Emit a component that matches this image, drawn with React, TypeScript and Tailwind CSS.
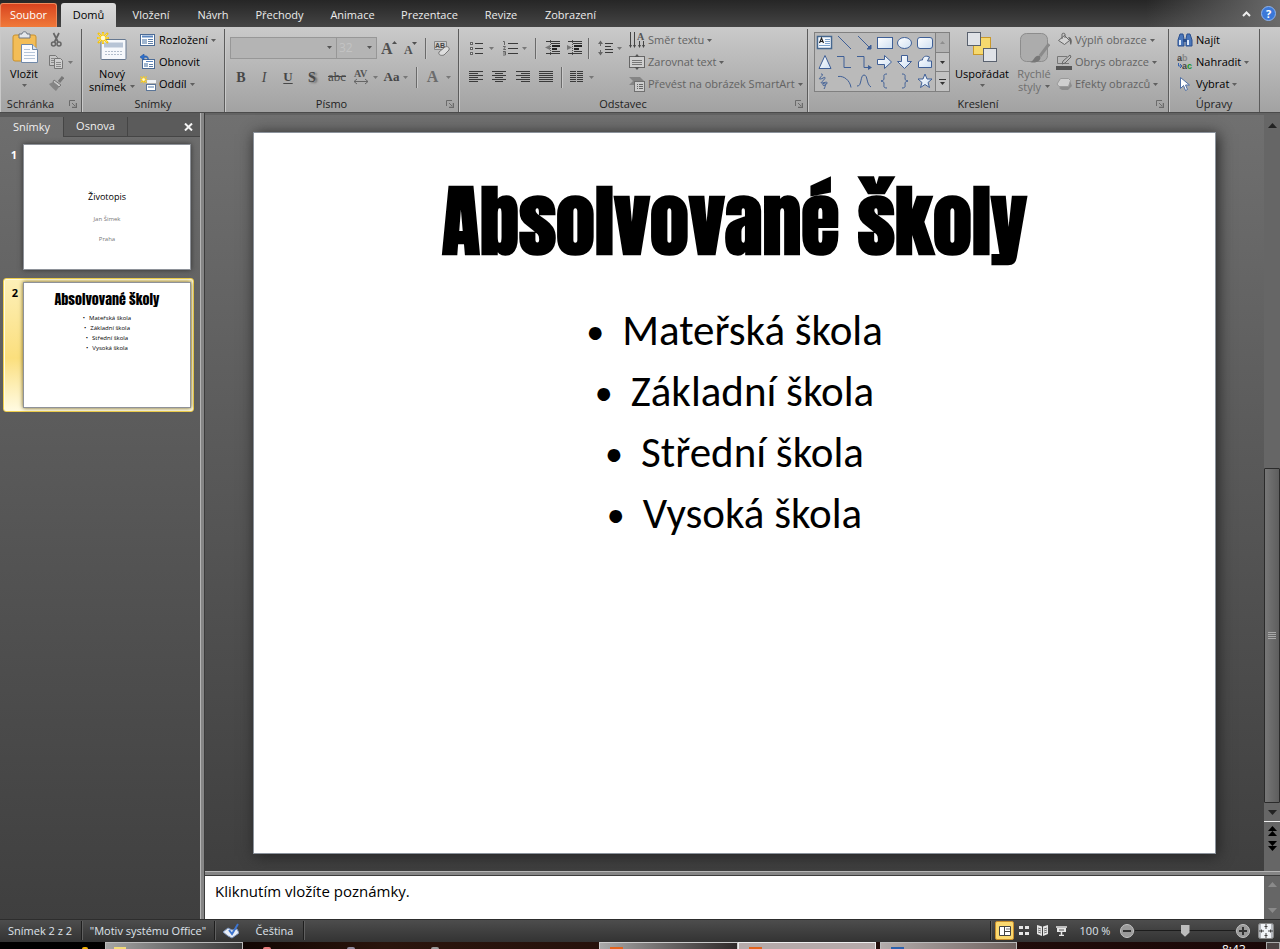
import { useState } from "react";
import type { ReactNode } from "react";

const tabs = [
  { name: "Vložení", width: "w-[66px]" },
  { name: "Návrh", width: "w-[58px]" },
  { name: "Přechody", width: "w-[75px]" },
  { name: "Animace", width: "w-[71px]" },
  { name: "Prezentace", width: "w-[83px]" },
  { name: "Revize", width: "w-[60px]" },
  { name: "Zobrazení", width: "w-[79px]" },
];

const skoly = ["Mateřská škola", "Základní škola", "Střední škola", "Vysoká škola"];

function Caret({ className = "text-[#5f5f5f]" }: { className?: string }) {
  return (
    <svg width="5" height="3" viewBox="0 0 5 3" className={`shrink-0 ${className}`} aria-hidden="true">
      <path d="M0 0h5L2.500 3z" fill="currentColor" />
    </svg>
  );
}

function Svg({ size = 16, children }: { size?: number; children: ReactNode }) {
  return (
    <svg width={size} height={size} viewBox={`0 0 ${size} ${size}`} className="shrink-0" fill="none" aria-hidden="true">
      {children}
    </svg>
  );
}

function Group({ label, width, launcher, children }: { label: string; width: string; launcher?: boolean; children: ReactNode }) {
  return (
    <section
      aria-label={label}
      className={`${width} flex shrink-0 flex-col border-r border-[#5c5c5c] shadow-[inset_1px_0_0_#c9c9c9]`}
    >
      <div className="flex h-[67px]">{children}</div>
      <div className={`flex h-4 items-center ${launcher ? "pr-1" : ""}`}>
        <span className={`flex-1 text-center text-[#222] ${launcher ? "pr-2" : ""}`}>{label}</span>
        {launcher && (
          <button aria-label={`${label} – další možnosti`}>
            <svg width="8" height="8" viewBox="0 0 8 8" fill="none" stroke="#6b6b6b" aria-hidden="true">
              <path d="M.5 6V.5H6M3 3l3 3" />
              <path d="M7.500 3v4.500H3" strokeWidth="1.500" />
            </svg>
          </button>
        )}
      </div>
    </section>
  );
}

function Row({ icon, label, caret, disabled }: { icon: ReactNode; label: string; caret?: boolean; disabled?: boolean }) {
  return (
    <button
      disabled={disabled}
      className={`flex h-[22px] items-center gap-[3px] whitespace-nowrap ${disabled ? "text-[#636363]" : "text-black"}`}
    >
      {icon}
      <span>{label}</span>
      {caret && <Caret />}
    </button>
  );
}

function Tool({ label, width, children, caret }: { label: string; width: string; children: ReactNode; caret?: boolean }) {
  return (
    <button aria-label={label} disabled className={`${width} flex h-[22px] shrink-0 items-center justify-center gap-1 text-[#474747]`}>
      {children}
      {caret && <Caret className="text-[#777]" />}
    </button>
  );
}

function Sep() {
  return <span className="mx-1 h-[21px] w-px shrink-0 bg-[#6a6a6a] shadow-[1px_0_0_#c9c9c9]" />;
}

function Lines({ rows, offset = 0 }: { rows: number[][]; offset?: number }) {
  return (
    <>
      {rows.map(([x, w], i) => (
        <path key={i} d={`M${x} ${offset + i * 2 + 0.5}h${w}`} stroke="#3a3a3a" />
      ))}
    </>
  );
}

function Sparkle() {
  return (
    <>
      <path d="M6 0v12M0 6h12M1 1l10 10M11 1L1 11" stroke="#f2c313" strokeWidth="2.200" />
      <path d="M6 1v10M1 6h10M2 2l8 8M10 2l-8 8" stroke="#ffe873" strokeWidth=".8" />
      <circle cx="6" cy="6" r="2.200" fill="#fffbd8" />
    </>
  );
}

function ShapeGallery() {
  const line = "#3f5f96";
  const shapes: [string, ReactNode][] = [
    ["Textové pole", <><rect x="1.500" y="2.500" width="14" height="12" fill="#f7fbff" stroke="#46678f" strokeWidth="1.500" /><path d="M3.500 9l2-5 2 5M4.200 7.500h2.600" stroke="#222" strokeWidth="1.200" /><path d="M9 5.500h5M9 7.500h5M9 9.500h5M3 11.500h11" stroke="#7fa3cc" /></>],
    ["Čára", <path d="M2 2l13 13" stroke={line} />],
    ["Šipka", <path d="M2 2l12 12M15 11v4h-4z" stroke={line} fill={line} />],
    ["Obdélník", <rect x="1.500" y="3.500" width="15" height="11" fill="url(#fillShape)" stroke={line} />],
    ["Elipsa", <ellipse cx="8.500" cy="9" rx="7" ry="5.500" fill="url(#fillShape)" stroke={line} />],
    ["Zaoblený obdélník", <rect x="1.500" y="3.500" width="15" height="11" rx="2.500" fill="url(#fillShape)" stroke={line} />],
    ["Trojúhelník", <path d="M9 2.500L15 15.500H3z" fill="url(#fillShape)" stroke={line} />],
    ["Spojnice", <path d="M1 3.500h7v11h7" stroke={line} />],
    ["Spojnice se šipkou", <><path d="M1 3.500h7v11h6" stroke={line} /><path d="M12 12l4 2.500-4 2.500z" fill={line} /></>],
    ["Šipka doprava", <path d="M1.500 6.500h7v-4l7 6.500-7 6.500v-4h-7z" fill="url(#fillShape)" stroke={line} />],
    ["Šipka dolů", <path d="M5.500 2.500h6v6h4l-7 7-7-7h4z" fill="url(#fillShape)" stroke={line} />],
    ["Volný tvar", <path d="M2.500 14.500V9c1-2 3-2 4-2 0-3 3-5 7-3l-2 4h4v6.500z" fill="url(#fillShape)" stroke={line} />],
    ["Skica", <path d="M5 2c5 0-4 5-1 5s5-3 5-1-6 5-3 5 5-2 5 0-5 4-4 1 4 0 1 5" stroke={line} />],
    ["Oblouk", <path d="M2 4.500c6-1 12 4 13 11" stroke={line} />],
    ["Křivka", <path d="M1 14c5 1 3-11 7-11s2 9 7 12" stroke={line} />],
    ["Levá závorka", <path d="M11 2c-4 0-3 2-3 4s-1 3-3 3c2 0 3 1 3 3s-1 4 3 4" stroke={line} />],
    ["Pravá závorka", <path d="M6 2c4 0 3 2 3 4s1 3 3 3c-2 0-3 1-3 3s1 4-3 4" stroke={line} />],
    ["Hvězda", <path d="M9 2l2 5h5l-4 3.500 1.500 5L9 12.500l-4.500 3 1.500-5L2 7h5z" fill="url(#fillShape)" stroke={line} />],
  ];
  return (
    <div className="flex h-[60px] border border-[#808080] bg-[#bababa]">
      <svg width="0" height="0" className="absolute" aria-hidden="true">
        <linearGradient id="fillShape" x1="0" y1="0" x2="1" y2="1">
          <stop offset="0" stopColor="#ffffff" />
          <stop offset="1" stopColor="#cfe0f2" />
        </linearGradient>
      </svg>
      <div className="grid grid-cols-6">
        {shapes.map(([name, shape]) => (
          <button key={name} aria-label={name} className="flex h-[19px] w-5 items-center justify-center">
            <Svg size={18}>{shape}</Svg>
          </button>
        ))}
      </div>
      <div className="flex w-[14px] flex-col divide-y divide-[#808080] border-l border-[#808080] bg-[#c2c2c2]">
        <button aria-label="Předchozí řádek" className="flex flex-1 items-center justify-center bg-[#b2b2b2]">
          <Caret className="rotate-180 text-[#8e8e8e]" />
        </button>
        <button aria-label="Další řádek" className="flex flex-1 items-center justify-center">
          <Caret className="text-[#333]" />
        </button>
        <button aria-label="Více" className="flex flex-1 flex-col items-center justify-center gap-[2px]">
          <span className="h-px w-[7px] bg-[#333]" />
          <Caret className="text-[#333]" />
        </button>
      </div>
    </div>
  );
}

function Ribbon() {
  return (
    <div className="flex overflow-hidden border-b border-[#4b4b4b] bg-linear-to-b from-[#cacaca] to-[#a2a2a2] pt-[2px]">
      <Group label="Schránka" width="w-[82px]" launcher>
        <button className="flex w-12 flex-col items-center pt-[2px] leading-[13px] text-black">
          <Svg size={32}>
            <rect x="5" y="4" width="23" height="26" rx="2" fill="#f3bd57" stroke="#c8902d" />
            <path d="M11 3h3c0-3 5-3 5 0h3v4H11z" fill="#e3e6ea" stroke="#6d7580" />
            <path d="M13.500 13.500h11l5 5v13h-16z" fill="#fbfcff" stroke="#7189a8" />
            <path d="M24.500 13.500v5h5" fill="#d9e4f1" stroke="#7189a8" />
            <path d="M16 18.500h6M16 21.500h11M16 24.500h11M16 27.500h11" stroke="#b6c6da" />
          </Svg>
          <span className="pt-1">Vložit</span>
          <span className="flex h-[11px] items-center">
            <Caret />
          </span>
        </button>
        <div className="flex flex-col">
          <button aria-label="Vyjmout" className="flex h-[22px] items-center">
            <Svg>
              <path d="M5.500 1L10 10M11 1L6.500 10" stroke="#666" strokeWidth="1.700" />
              <circle cx="5.500" cy="12" r="2" stroke="#666" strokeWidth="1.500" />
              <circle cx="11" cy="12" r="2" stroke="#666" strokeWidth="1.500" />
            </Svg>
          </button>
          <button aria-label="Kopírovat" className="flex h-[22px] items-center gap-1">
            <Svg>
              <path d="M1.500 1.500h6l2 2v8h-8z" fill="#c8c8c8" stroke="#777" />
              <path d="M6.500 4.500h6l2 2v8h-8z" fill="#d0d0d0" stroke="#777" />
              <path d="M3 4.500h3M3 6.500h3M3 8.500h3M8 8.500h5M8 10.500h5M8 12.500h5" stroke="#8a8a8a" />
            </Svg>
            <Caret className="text-[#777]" />
          </button>
          <button aria-label="Kopírovat formát" className="flex h-[22px] items-center">
            <Svg>
              <path d="M15 1l-4 5" stroke="#777" strokeWidth="3" />
              <path d="M6 4l7 5-2 2-6-5z" fill="#c9c9c9" stroke="#777" />
              <path d="M5 6l6 5-3 4C5 13 3 10 1 8z" fill="#858585" />
            </Svg>
          </button>
        </div>
      </Group>

      <Group label="Snímky" width="w-[143px]">
        <button className="ml-[2px] flex w-[56px] flex-col items-center pt-[2px] leading-[13px] text-black">
          <Svg size={32}>
            <rect x="5" y="8.500" width="25" height="20" rx="1" fill="#f6f8fb" stroke="#667890" />
            <rect x="8" y="11.500" width="19" height="5" fill="#b7c4d5" />
            <path d="M9 20.500h17M9 23.500h17" stroke="#b2bdcb" strokeDasharray="2 1" />
            <g transform="translate(1 1)">
              <Sparkle />
            </g>
          </Svg>
          <span className="pt-1">Nový</span>
          <span className="flex items-center gap-1">
            snímek <Caret />
          </span>
        </button>
        <div className="flex flex-col">
          <Row
            label="Rozložení"
            caret
            icon={
              <Svg>
                <rect x=".5" y="2.500" width="14" height="11" fill="#fff" stroke="#4b6a94" />
                <path d="M2 4.500h11" stroke="#5b86c0" strokeWidth="2" />
                <rect x="2" y="7" width="5" height="5" fill="#a0b6d0" />
                <path d="M8 7.500h5M8 9.500h5M8 11.500h5" stroke="#5f7fa8" />
              </Svg>
            }
          />
          <Row
            label="Obnovit"
            icon={
              <Svg>
                <rect x="2.500" y="5.500" width="12" height="9" fill="#fff" stroke="#4b6a94" />
                <path d="M6 7.500h7" stroke="#5b86c0" />
                <rect x="4" y="9" width="4" height="4" fill="#a0b6d0" />
                <path d="M9 10.500h4M9 12.500h4" stroke="#5f7fa8" />
                <path d="M8 6c0-3-2-3-4-2.500V6L0 3l4-3v2c3-.5 5 1 4 4z" fill="#2f6fca" stroke="#1d56a8" strokeWidth=".6" />
              </Svg>
            }
          />
          <Row
            label="Oddíl"
            caret
            icon={
              <Svg>
                <path d="M7 5.500h9" stroke="#f0f2f5" strokeWidth="3" />
                <rect x="6.500" y="8.500" width="9" height="6" fill="#fff" stroke="#5b7598" />
                <rect x="8" y="10" width="6" height="2" fill="#a6bbd4" />
                <g transform="scale(.6)">
                  <Sparkle />
                </g>
              </Svg>
            }
          />
        </div>
      </Group>

      <Group label="Písmo" width="w-[234px]" launcher>
        <div className="flex flex-col gap-[7px] pl-[5px] pt-2">
          <div className="flex h-[22px] items-center">
            <div className="relative h-[22px] w-[107px]">
              <select aria-label="Písmo" disabled className="h-full w-full appearance-none border border-[#979797] bg-[#b4b4b4] opacity-100" />
              <Caret className="absolute right-[5px] top-[9px] text-[#555]" />
            </div>
            <div className="relative h-[22px] w-10">
              <select
                aria-label="Velikost písma"
                disabled
                className="h-full w-full appearance-none border border-l-0 border-[#979797] bg-[#b4b4b4] pl-[2px] text-[12px] text-[#c3c3c3] opacity-100"
              >
                <option>32</option>
              </select>
              <Caret className="absolute right-[5px] top-[9px] text-[#555]" />
            </div>
            <Tool label="Zvětšit písmo" width="w-6">
              <Svg>
                <text x="0" y="14" fontSize="16" fontWeight="bold" fontFamily="Liberation Serif" fill="#505050">A</text>
                <path d="M11 4h5l-2.500-3z" fill="#505050" />
              </Svg>
            </Tool>
            <Tool label="Zmenšit písmo" width="w-5">
              <Svg>
                <text x="1" y="14" fontSize="12" fontWeight="bold" fontFamily="Liberation Serif" fill="#505050">A</text>
                <path d="M9 2h5l-2.500 3z" fill="#505050" />
              </Svg>
            </Tool>
            <Sep />
            <Tool label="Vymazat formátování" width="w-6">
              <Svg>
                <path d="M.5 1.500h12v8H.5z" fill="#ccc" stroke="#888" />
                <text x="1" y="8" fontSize="7" fontWeight="bold" fontFamily="Liberation Sans" fill="#444">AB</text>
                <path d="M5 12l6-5c2-1 5 0 4 3l-5 5c-3 1-6 0-5-3z" fill="#dedede" stroke="#777" />
              </Svg>
            </Tool>
          </div>
          <div className="flex h-[22px] items-center font-['Liberation_Serif',serif] text-[13px]">
            <Tool label="Tučné" width="w-[22px]"><b className="text-[14px]">B</b></Tool>
            <Tool label="Kurzíva" width="w-6"><i className="text-[14px]">I</i></Tool>
            <Tool label="Podtržené" width="w-6"><b className="underline underline-offset-2">U</b></Tool>
            <Tool label="Stín" width="w-6"><b className="text-[14px] [text-shadow:2px_1px_2px_#666]">S</b></Tool>
            <Tool label="Přeškrtnuté" width="w-[26px]"><b className="font-medium line-through">abc</b></Tool>
            <Tool label="Mezery mezi znaky" width="w-[30px]" caret>
              <svg width="16" height="16" viewBox="0 0 16 16" fill="none" aria-hidden="true">
                <text x="1" y="8" fontSize="10" fontWeight="bold" fontFamily="Liberation Serif" fill="#555">AV</text>
                <path d="M1 12.500h14M4 10l-3 2.500L4 15M12 10l3 2.500-3 2.500" stroke="#666" />
              </svg>
            </Tool>
            <Tool label="Velká písmena" width="w-8" caret><b>Aa</b></Tool>
            <Sep />
            <Tool label="Barva písma" width="w-8" caret><b className="px-1 text-[16px] text-[#6c6c6c]">A</b></Tool>
          </div>
        </div>
      </Group>

      <Group label="Odstavec" width="w-[349px]" launcher>
        <div className="flex w-[170px] flex-col gap-[7px] pl-[6px] pt-2">
          <div className="flex h-[22px] items-center">
            <Tool label="Odrážky" width="w-8" caret>
              <Svg>
                <path d="M6 3.500h8M6 8.500h8M6 13.500h8" stroke="#3a3a3a" />
                <path d="M1 3.500h3M1 8.500h3M1 13.500h3" stroke="#666" strokeWidth="3" />
                <path d="M2 3.500h1M2 8.500h1M2 13.500h1" stroke="#ddd" />
              </Svg>
            </Tool>
            <Tool label="Číslování" width="w-[34px]" caret>
              <Svg>
                <path d="M6 3.500h10M6 8.500h10M6 13.500h10" stroke="#3a3a3a" />
                <path d="M1 1.500h1.500V5M1 6.500h2.500l-2 3h2.500M1 11.500h2.500V15H1m0-2h2" stroke="#666" />
              </Svg>
            </Tool>
            <Sep />
            <Tool label="Zmenšit úroveň" width="w-6">
              <Svg>
                <path d="M2 1.500h14M7 3.500h9M2 13.500h14" stroke="#3a3a3a" />
                <path d="M8 6h8M8 9h5" stroke="#222" strokeWidth="2" />
                <path d="M8 11.500h8" stroke="#3a3a3a" />
                <path d="M6 5v5L1 7.500z" fill="#777" />
                <path d="M6.500 0v16" stroke="#555" strokeDasharray="1 1" />
              </Svg>
            </Tool>
            <Tool label="Zvětšit úroveň" width="w-5">
              <Svg>
                <path d="M2 1.500h14M7 3.500h9M2 13.500h14" stroke="#3a3a3a" />
                <path d="M8 6h8M8 9h5" stroke="#222" strokeWidth="2" />
                <path d="M8 11.500h8" stroke="#3a3a3a" />
                <path d="M1 5v5l5-2.500z" fill="#777" />
                <path d="M6.500 0v16" stroke="#555" strokeDasharray="1 1" />
              </Svg>
            </Tool>
            <Sep />
            <Tool label="Řádkování" width="w-8" caret>
              <Svg>
                <path d="M8 3.500h8M8 6.500h6M8 9.500h8M8 12.500h8" stroke="#3a3a3a" />
                <path d="M3.500 1v5M3.500 10v5" stroke="#666" />
                <path d="M1 4l2.500-3.500L6 4zM1 12l2.500 3.500L6 12z" fill="#666" />
              </Svg>
            </Tool>
          </div>
          <div className="flex h-[22px] items-center gap-[7px] pl-1">
            <Tool label="Zarovnat vlevo" width="w-4"><Svg><Lines offset={2} rows={[[0, 14], [0, 9], [0, 14], [0, 9], [0, 14], [0, 9]]} /></Svg></Tool>
            <Tool label="Na střed" width="w-4"><Svg><Lines offset={2} rows={[[0, 14], [3, 8], [0, 14], [3, 8], [0, 14], [3, 8]]} /></Svg></Tool>
            <Tool label="Zarovnat vpravo" width="w-4"><Svg><Lines offset={2} rows={[[1, 14], [6, 9], [1, 14], [6, 9], [1, 14], [6, 9]]} /></Svg></Tool>
            <Tool label="Do bloku" width="w-4"><Svg><Lines offset={2} rows={[[1, 14], [1, 14], [1, 14], [1, 14], [1, 14], [1, 14]]} /></Svg></Tool>
            <span className="h-[21px] w-px bg-[#6a6a6a] shadow-[1px_0_0_#c9c9c9]" />
            <Tool label="Sloupce" width="w-6" caret>
              <Svg>
                <Lines offset={2} rows={[[1, 6], [1, 6], [1, 6], [1, 6], [1, 6], [1, 6]]} />
                <Lines offset={2} rows={[[8, 6], [8, 6], [8, 6], [8, 6], [8, 6], [8, 6]]} />
              </Svg>
            </Tool>
          </div>
        </div>
        <div className="flex flex-col">
          <Row
            disabled
            caret
            label="Směr textu"
            icon={
              <Svg>
                <path d="M1.500 0v15M5.500 0v15M10.500 9v6M14.500 9v6" stroke="#444" />
                <path d="M0 13h3l-1.500 3zM4 13h3l-1.500 3zM9 13h3l-1.500 3zM13 13h3l-1.500 3z" fill="#444" />
                <text x="8" y="8" fontSize="10" fontWeight="bold" fontFamily="Liberation Serif" fill="#555">A</text>
              </Svg>
            }
          />
          <Row
            disabled
            caret
            label="Zarovnat text"
            icon={
              <Svg>
                <rect x=".5" y="2.500" width="15" height="11" fill="#cfcfcf" stroke="#666" />
                <path d="M3 6.500h10M3 8.500h10M3 10.500h10" stroke="#777" />
                <path d="M5.500 3L8 0l2.500 3zM5.500 13L8 16l2.500-3z" fill="#555" />
              </Svg>
            }
          />
          <Row
            disabled
            caret
            label="Převést na obrázek SmartArt"
            icon={
              <Svg>
                <path d="M0 1h11l4 4-3 4H0l4-4z" fill="#858585" />
                <rect x="5.500" y="5.500" width="10" height="10" fill="#cdcdcd" stroke="#707070" />
                <path d="M8 8.500h1M8 10.500h1M8 12.500h1M10 8.500h4M10 10.500h4M10 12.500h4" stroke="#666" />
              </Svg>
            }
          />
        </div>
      </Group>

      <Group label="Kreslení" width="w-[361px]" launcher>
        <div className="pl-[6px] pt-[3px]">
          <ShapeGallery />
        </div>
        <button className="flex w-16 flex-col items-center pt-[2px] leading-[13px] text-black">
          <Svg size={32}>
            <rect x="7.500" y="6.500" width="17" height="17" fill="#f6d96e" stroke="#c9982a" />
            <rect x="1.500" y="1.500" width="13" height="13" fill="#dfe2e7" stroke="#59616e" />
            <rect x="17.500" y="17.500" width="13" height="13" fill="#dfe2e7" stroke="#59616e" />
          </Svg>
          <span className="pt-1">Uspořádat</span>
          <span className="flex h-[11px] items-center">
            <Caret />
          </span>
        </button>
        <button disabled className="ml-[2px] flex w-9 flex-col items-center pt-[2px] leading-[13px] text-[#6f6f6f]">
          <Svg size={32}>
            <rect x="2.500" y="2.500" width="27" height="28" rx="6" fill="#acacac" stroke="#8c8c8c" />
            <path d="M31 13l-9 12" stroke="#8a8a8a" strokeWidth="3" />
            <path d="M12 31c4 0 4-8 10-6 2 4-3 8-10 6z" fill="#777" />
          </Svg>
          <span className="pt-1">Rychlé</span>
          <span className="flex items-center gap-1">
            styly <Caret />
          </span>
        </button>
        <div className="flex flex-col pl-1">
          <Row
            disabled
            caret
            label="Výplň obrazce"
            icon={
              <Svg>
                <path d="M2.500 8.500l6-5 5 5-5 4z" fill="#d2d2d2" stroke="#666" />
                <path d="M6 7V2c0-1 3-1 3 0v4" stroke="#666" />
                <path d="M12 5c3 0 5 3 3 8-2-2 0-4-3-8z" fill="#666" />
              </Svg>
            }
          />
          <Row
            disabled
            caret
            label="Obrys obrazce"
            icon={
              <Svg>
                <path d="M11 2.500H1.500v7H13" stroke="#777" />
                <path d="M6 10l1-3 7-6 1 2-6 6z" fill="#bbb" stroke="#666" />
                <path d="M0 14h16" stroke="#555" strokeWidth="4" />
              </Svg>
            }
          />
          <Row
            disabled
            caret
            label="Efekty obrazců"
            icon={
              <Svg>
                <path d="M3 12l3 2h6l4-4-2-5z" fill="#8d8d8d" />
                <path d="M4.500 2.500h8l2 2-2 6H3L1 8z" fill="#cfcfcf" stroke="#9a9a9a" />
              </Svg>
            }
          />
        </div>
      </Group>

      <Group label="Úpravy" width="w-[91px]">
        <div className="flex flex-col pl-2">
          <Row
            label="Najít"
            icon={
              <Svg>
                <path d="M3 2h3l1 5v7H1V8zM10 2h3l2 6v6H9V7z" fill="#4a76ba" stroke="#2b4f8d" />
                <path d="M3 8v5M11 8v5" stroke="#dce8f8" strokeWidth="2" />
                <path d="M6 7h4v3H6z" fill="#2b4f8d" />
              </Svg>
            }
          />
          <Row
            label="Nahradit"
            caret
            icon={
              <Svg>
                <text x="0" y="7" fontSize="9" fontWeight="bold" fontFamily="Liberation Sans" fill="#444">a</text>
                <text x="5" y="7" fontSize="9" fontWeight="bold" fontFamily="Liberation Sans" fill="#888">b</text>
                <text x="5" y="15" fontSize="9" fontWeight="bold" fontFamily="Liberation Sans" fill="#444">a</text>
                <text x="10" y="15" fontSize="9" fontWeight="bold" fontFamily="Liberation Sans" fill="#16962a">c</text>
                <path d="M1.500 9v3H4M3 10l2 2-2 2" stroke="#3763ad" />
              </Svg>
            }
          />
          <Row
            label="Vybrat"
            caret
            icon={
              <Svg>
                <path d="M3.500 1.500v11l3-3 2 5 2-1-2-4.500h4z" fill="#fff" stroke="#4f6fa5" />
              </Svg>
            }
          />
        </div>
      </Group>
    </div>
  );
}

function Thumbnails() {
  return (
    <aside className="flex w-[200px] shrink-0 flex-col border-t-4 border-[#5a5a5a] bg-linear-to-b from-[#6e6e6e] to-[#3f3f3f]">
      <div className="flex h-[20px] text-[#f0f0f0]">
        <button className="w-[63px] text-center">Snímky</button>
        <button className="w-[65px] border border-t-0 border-[#454545] bg-[#5b5b5b] text-center">Osnova</button>
        <div className="flex flex-1 items-center justify-end border-b border-[#454545] bg-[#5b5b5b] pr-[7px]">
          <button aria-label="Zavřít">
            <svg width="9" height="8" viewBox="0 0 9 8" stroke="#f4f4f4" strokeWidth="2" aria-hidden="true">
              <path d="M1 .5l7 7M8 .5l-7 7" />
            </svg>
          </button>
        </div>
      </div>

      <div className="flex gap-[6px] pb-[6px] pl-[3px] pt-[7px]">
        <b className="w-[14px] pt-[3px] text-right text-white">1</b>
        <div className="flex aspect-[4/3] w-[168px] flex-col items-center border border-[#8e9299] bg-white pt-[45px] shadow-[0_0_5px_#333]">
          <p className="text-[9px] leading-[14px] text-black">Životopis</p>
          <p className="pt-[10px] text-[6px] leading-[10px] text-[#777]">Jan Šimek</p>
          <p className="pt-[10px] text-[6px] leading-[10px] text-[#777]">Praha</p>
        </div>
      </div>

      <div className="ml-[3px] mt-[2px] flex w-[191px] gap-[5px] rounded-[3px] border border-[#f0cf4d] bg-linear-to-b from-[#fdf0b8] via-[#fbdf7d] via-60% to-[#fffbe2] py-[3px] pl-[1px] shadow-[inset_0_0_0_1px_#fffbe0]">
        <b className="w-[13px] pt-[3px] text-right text-black">2</b>
        <div className="flex aspect-[4/3] w-[168px] flex-col items-center border border-[#8e9299] bg-white pt-[8px] shadow-[0_0_4px_#6a5a20]">
          <h2 className="font-['Impact','Anton','Open_Sans',sans-serif] text-[14px] font-normal leading-[18px] text-black">
            Absolvované školy
          </h2>
          <ul className="pt-[4px] text-center text-[6px] leading-[10px] text-black">
            {skoly.map((s) => (
              <li key={s}>
                <span className="pr-1">•</span>
                {s}
              </li>
            ))}
          </ul>
        </div>
      </div>
    </aside>
  );
}

function Arrow({ down, className }: { down?: boolean; className: string }) {
  return (
    <svg width="9" height="5" viewBox="0 0 9 5" className={className} aria-hidden="true">
      <path d={down ? "M0 0h9L4.500 5z" : "M0 5h9L4.500 0z"} fill="currentColor" />
    </svg>
  );
}

function Editor() {
  return (
    <div className="flex flex-1 border-t-2 border-[#636363] bg-linear-to-b from-[#707070] to-[#3f3f3f]">
      <main className="flex-1 px-12 pb-[17px] pt-[17px]">
        <article className="aspect-[4/3] border border-[#8c939c] bg-white text-black shadow-[2px_2px_14px_#222]">
          <h1 className="pt-[34px] text-center font-['Impact','Anton','Open_Sans',sans-serif] text-[78px] font-bold leading-[108px]">
            Absolvované školy
          </h1>
          <ul className="pt-[26px] font-['Calibri','Carlito','Lato',sans-serif] text-[43px]">
            {skoly.map((s) => (
              <li key={s} className="flex h-[61px] items-center justify-center">
                <span className="w-9 text-[36px]">•</span>
                {s}
              </li>
            ))}
          </ul>
        </article>
      </main>
      <div className="flex w-4 shrink-0 flex-col items-center bg-[#666]">
        <button aria-label="Posunout nahoru" className="flex h-5 items-center">
          <Arrow className="text-[#222]" />
        </button>
        <div className="flex-[334]" />
        <div className="flex w-full flex-[334] flex-col items-center justify-center gap-px rounded-[1px] border border-[#2b2b2b] bg-linear-to-r from-[#777] to-[#5e5e5e]">
          {[1, 2, 3, 4].map((i) => (
            <span key={i} className="h-px w-2 bg-[#a9a9a9]" />
          ))}
        </div>
        <button aria-label="Posunout dolů" className="flex h-[18px] items-center">
          <Arrow down className="text-[#222]" />
        </button>
        <div className="flex h-[50px] w-full flex-col items-center gap-[5px] border-t border-[#eee] pt-1">
          <button aria-label="Předchozí snímek">
            <Arrow className="text-black" />
            <Arrow className="text-black" />
          </button>
          <button aria-label="Další snímek">
            <Arrow down className="text-black" />
            <Arrow down className="text-black" />
          </button>
        </div>
      </div>
    </div>
  );
}

function StatusSep() {
  return <span className="h-[19px] w-px bg-[#1e1e1e] shadow-[1px_0_0_#606060]" />;
}

function StatusBar() {
  const [zoom, setZoom] = useState(50);
  return (
    <footer className="flex h-[23px] shrink-0 items-center border-t border-[#2d2d2d] bg-linear-to-b from-[#4d4d4d] to-[#333] pb-px text-[#dfe3ea]">
      <span className="w-[81px] pl-2">Snímek 2 z 2</span>
      <StatusSep />
      <span className="w-[132px] text-center">"Motiv systému Office"</span>
      <StatusSep />
      <button aria-label="Kontrola pravopisu" className="flex w-[31px] justify-center">
        <Svg>
          <path d="M0 9l5-4 4 2 5-1 2 4-7 5-4-2z" fill="#e9eef7" stroke="#7c94bd" />
          <path d="M6 7l3 4 6-10" stroke="#3c74d0" strokeWidth="2" />
        </Svg>
      </button>
      <span className="w-[57px] text-center">Čeština</span>
      <StatusSep />
      <div className="flex-1" />
      <StatusSep />
      <button aria-label="Normální" className="ml-1 flex h-[19px] w-[19px] items-center justify-center rounded-[2px] border border-[#c98f2c] bg-[#fbd970]">
        <svg width="12" height="10" viewBox="0 0 12 10" fill="none" aria-hidden="true">
          <path d="M.5.5h11v9H.5z" fill="#fff" stroke="#444" />
          <path d="M5.500 0v10M6 5.500h6" stroke="#444" />
          <path d="M7 3h4" stroke="#777" />
        </svg>
      </button>
      <button aria-label="Řazení snímků" className="flex w-[19px] justify-center">
        <svg width="10" height="9" viewBox="0 0 10 9" fill="#e6e6e6" aria-hidden="true">
          <path d="M0 0h4v3H0zM6 0h4v3H6zM0 6h4v3H0zM6 6h4v3H6z" />
        </svg>
      </button>
      <button aria-label="Zobrazení pro čtení" className="flex w-[18px] justify-center">
        <svg width="11" height="11" viewBox="0 0 11 11" fill="none" aria-hidden="true">
          <path d="M0 0l5 1.500V11L0 9zM11 0L6 1.500V11l5-2z" fill="#e6e6e6" />
          <path d="M1 3l3 1M1 5l3 1M1 7l3 1M10 3L7 4M10 5L7 6M10 7L7 8" stroke="#555" strokeWidth=".8" />
        </svg>
      </button>
      <button aria-label="Prezentace" className="flex w-5 justify-center">
        <svg width="11" height="10" viewBox="0 0 11 10" fill="none" aria-hidden="true">
          <path d="M0 1h11M5.500 6v3M3 9.500h5" stroke="#e6e6e6" strokeWidth="1.500" />
          <path d="M1 2h9v4H1z" fill="#e6e6e6" />
          <path d="M3 4h5" stroke="#555" />
        </svg>
      </button>
      <button className="w-12 text-center">100 %</button>
      <button aria-label="Oddálit" className="flex">
        <Svg>
          <circle cx="8" cy="8" r="6.500" fill="#9a9a9a" stroke="#c4c4c4" />
          <path d="M4 8h8" stroke="#333" strokeWidth="2" />
        </Svg>
      </button>
      <input
        type="range"
        aria-label="Lupa"
        value={zoom}
        onChange={(e) => setZoom(Number(e.target.value))}
        className="h-[13px] w-[100px] appearance-none bg-[linear-gradient(#1c1c1c,#1c1c1c)] bg-[length:100%_1px] bg-center bg-no-repeat [&::-webkit-slider-thumb]:h-[12px] [&::-webkit-slider-thumb]:w-[9px] [&::-webkit-slider-thumb]:appearance-none [&::-webkit-slider-thumb]:bg-[#bcbcbc] [&::-webkit-slider-thumb]:[clip-path:polygon(0_0,100%_0,100%_65%,50%_100%,0_65%)]"
      />
      <button aria-label="Přiblížit" className="flex">
        <Svg>
          <circle cx="8" cy="8" r="6.500" fill="#9a9a9a" stroke="#c4c4c4" />
          <path d="M4 8h8M8 4v8" stroke="#333" strokeWidth="2" />
        </Svg>
      </button>
      <button aria-label="Přizpůsobit oknu" className="ml-[7px] mr-[6px] flex">
        <Svg>
          <rect x=".5" y=".5" width="15" height="15" rx="2" fill="#b4b8bd" stroke="#8a8a8a" />
          <rect x="3" y="1" width="10" height="14" fill="#f1f4f8" />
          <path d="M8 1v5M8 10v5M1 8h5M10 8h5M6.500 3.500h3M6.500 12.500h3M3.500 6.500v3M12.500 6.500v3" stroke="#444" />
        </Svg>
      </button>
    </footer>
  );
}

function Taskbar() {
  return (
    <div className="flex h-[7px] shrink-0 overflow-hidden bg-linear-to-r from-black via-[#2b150d] via-30% to-[#1b0808]">
      <div className="flex w-[105px] items-end justify-end pr-[17px]">
        <span className="h-[2px] w-[6px] rounded-t bg-[#f2b200]" />
      </div>
      <div className="flex w-[138px] items-end border border-b-0 border-[#bbb] bg-linear-to-r from-[#a5a5a5] to-[#383838] pl-2">
        <span className="h-[2px] w-3 bg-[#f3dc78]" />
      </div>
      <div className="flex flex-1 items-end gap-[76px] pl-[20px]">
        <span className="h-[2px] w-2 rounded-t bg-[#e87a7a]" />
        <span className="h-[2px] w-2 rounded-t bg-[#8f8b9e]" />
        <span className="h-[2px] w-2 rounded-t bg-[#9a9a9a]" />
      </div>
      <div className="flex w-[139px] items-end border border-b-0 border-[#ccc] bg-linear-to-r from-[#aaa] to-[#2f2a2a] pl-[10px]">
        <span className="h-[2px] w-[13px] bg-[#e3641c]" />
      </div>
      <div className="flex w-[138px] items-end border border-b-0 border-[#eee] bg-[#b5aaaa] pl-[10px]">
        <span className="h-[2px] w-[13px] bg-[#e3641c]" />
      </div>
      <div className="ml-1 flex w-[137px] items-end border border-b-0 border-[#bbb] bg-linear-to-r from-[#b3acab] to-[#6f6360] pl-[10px]">
        <span className="h-[2px] w-[13px] bg-[#2b62ad]" />
      </div>
      <span className="w-[249px] pl-[205px] pt-[2px] text-[12px] leading-[12px] text-white">8:43</span>
      <span className="w-[14px] border border-b-0 border-[#aaa] bg-[#4a4242]" />
    </div>
  );
}

export default function App() {
  return (
    <div className="flex min-h-screen flex-col overflow-hidden bg-[#3f3f3f] font-['Segoe_UI','Open_Sans',sans-serif] text-[11px]">
      <nav className="flex h-[27px] items-end bg-linear-to-b from-[#262626] to-[#454545] text-[#ececec]">
        <button className="mr-1 h-6 w-[57px] rounded-t-[3px] border border-b-0 border-[#f08a5c] bg-linear-to-b from-[#d8431f] to-[#f0793a] text-white">
          Soubor
        </button>
        <button className="h-6 w-[55px] rounded-t-[3px] bg-linear-to-b from-[#dcdcdc] to-[#cacaca] text-black">Domů</button>
        <div className="flex h-6 pl-[2px]">
          {tabs.map((t) => (
            <button key={t.name} className={`${t.width} text-center`}>
              {t.name}
            </button>
          ))}
        </div>
        <div className="flex h-full flex-1 items-center justify-end gap-[10px] bg-linear-to-l from-[#6a6a6a] to-transparent to-20% pr-1">
          <button aria-label="Minimalizovat pás karet">
            <svg width="9" height="6" viewBox="0 0 9 6" fill="none" stroke="#eee" strokeWidth="2" aria-hidden="true">
              <path d="M1 5l3.500-3.500L8 5" />
            </svg>
          </button>
          <button aria-label="Nápověda" className="flex h-[15px] w-[15px] items-center justify-center rounded-full border border-[#8fb4ee] bg-[#3b78d8] font-bold leading-none text-white">
            ?
          </button>
        </div>
      </nav>
      <Ribbon />
      <div className="flex flex-1">
        <Thumbnails />
        <div className="w-[5px] shrink-0 border-l border-r border-l-[#b5b5b5] border-r-[#3c3c3c] bg-[#858585]" />
        <div className="flex min-w-0 flex-1 flex-col">
          <Editor />
          <div className="h-[5px] shrink-0 border-b border-t border-b-[#3c3c3c] border-t-[#b5b5b5] bg-[#858585]" />
          <div className="flex h-[43px] shrink-0 bg-white">
            <textarea
              aria-label="Poznámky"
              defaultValue="Kliknutím vložíte poznámky."
              className="flex-1 resize-none overflow-hidden px-[10px] pt-1 text-[15px] leading-[22px] text-black outline-none"
            />
            <div className="flex w-4 flex-col items-center justify-between bg-[#666] py-[6px]">
              <Arrow className="text-[#8a8a8a]" />
              <Arrow down className="text-[#8a8a8a]" />
            </div>
          </div>
        </div>
      </div>
      <StatusBar />
      <Taskbar />
    </div>
  );
}
